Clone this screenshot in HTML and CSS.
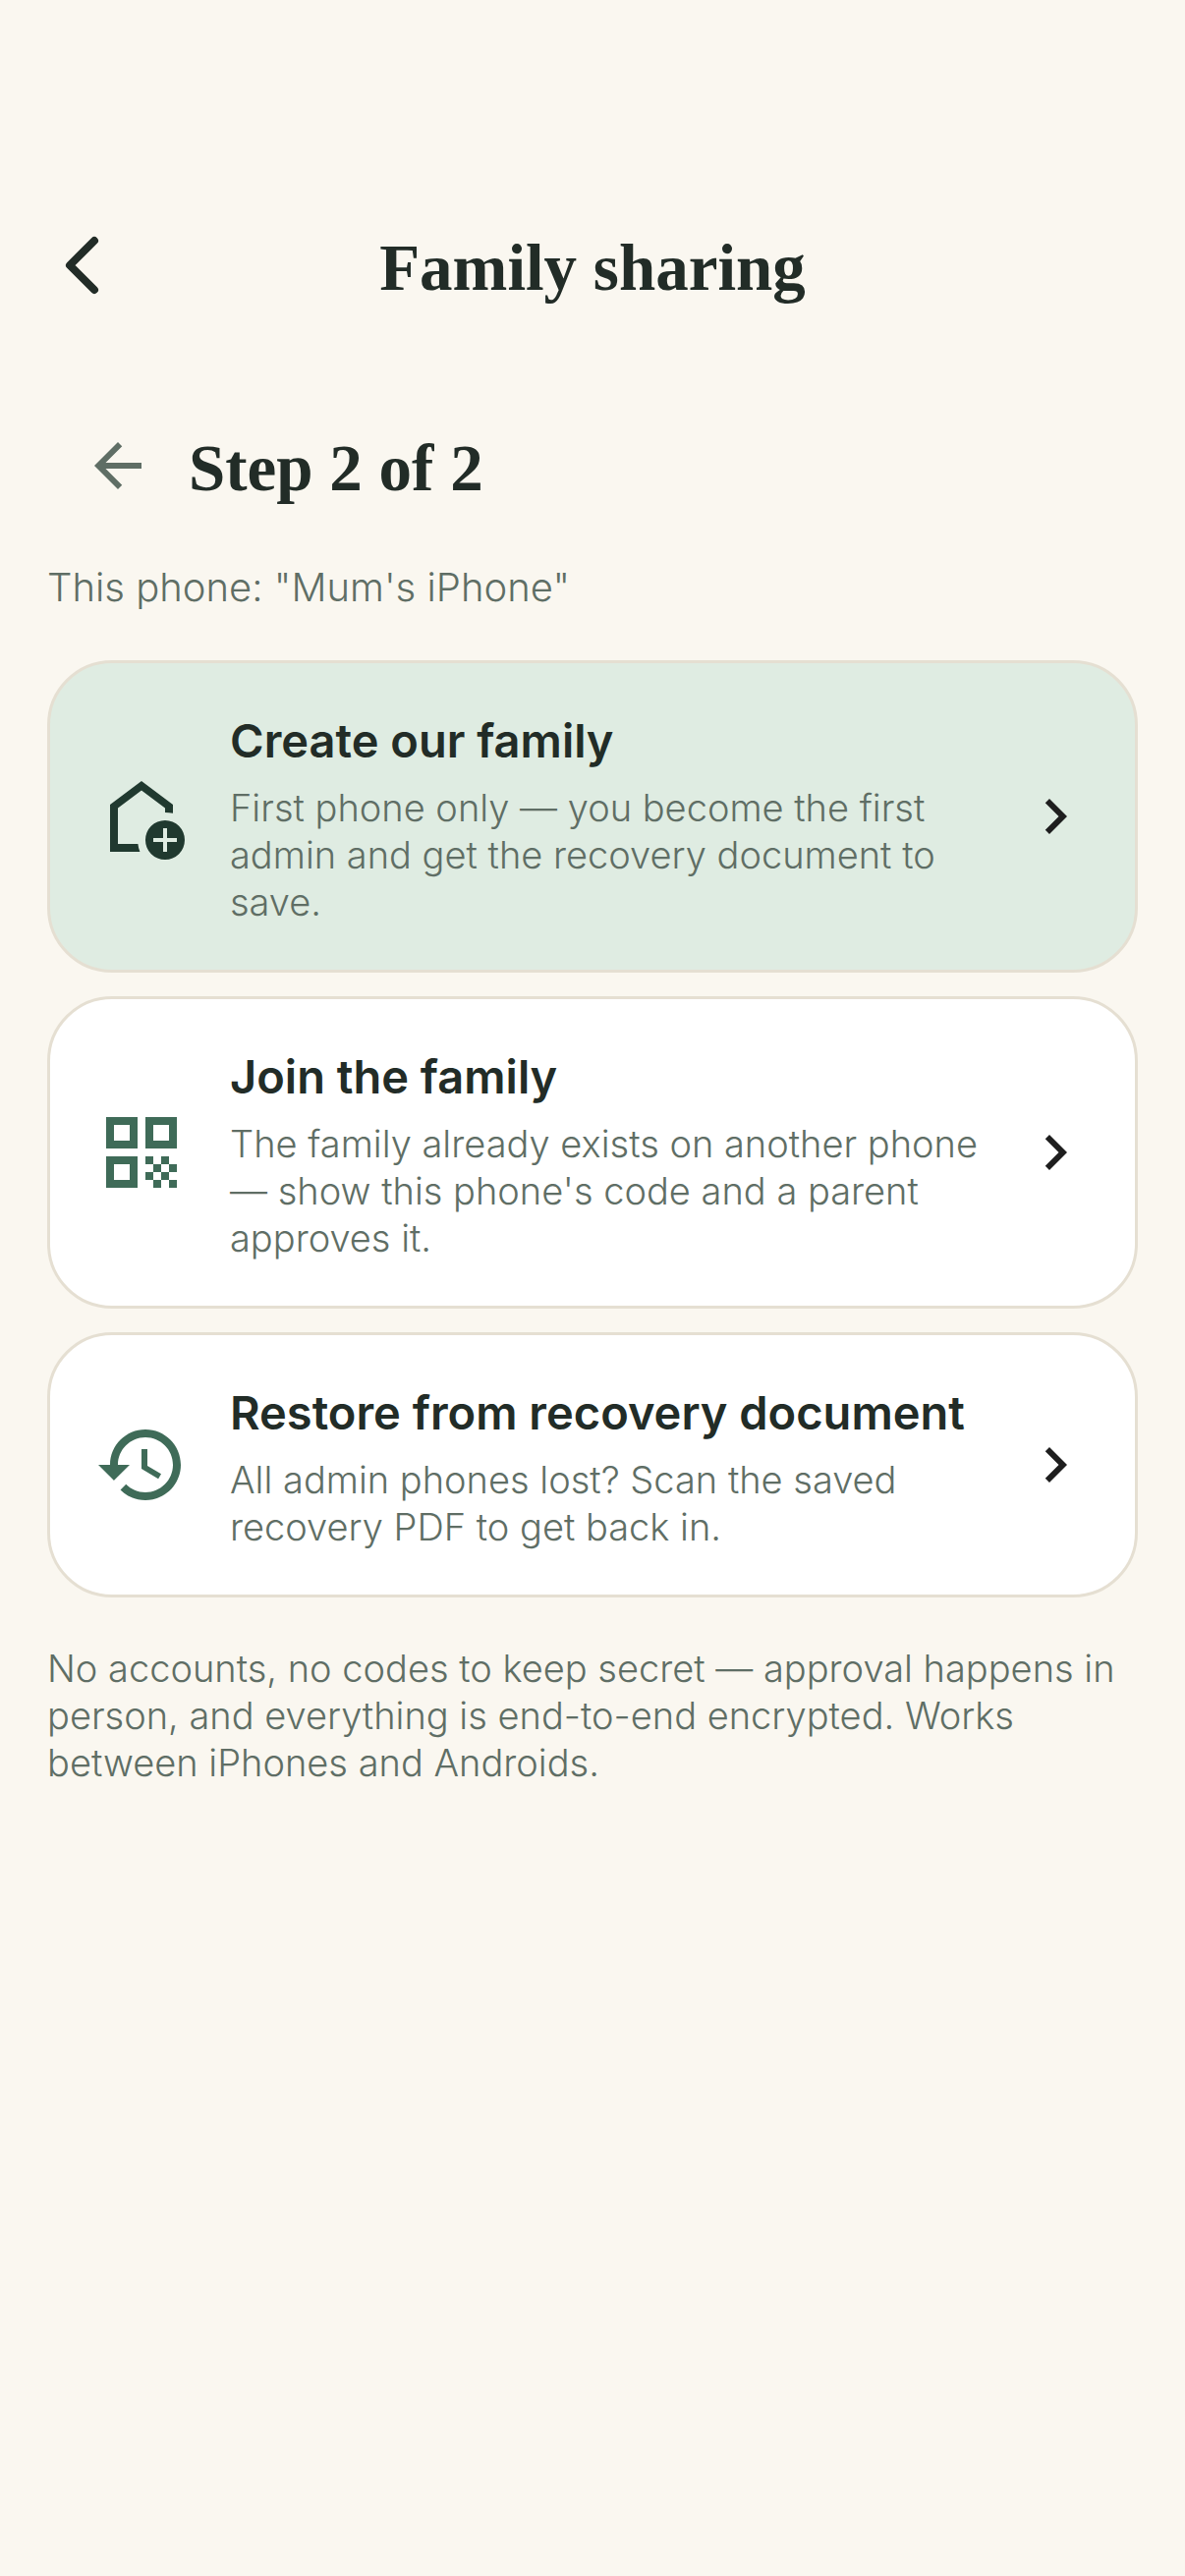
FILE: index.html
```html
<!DOCTYPE html>
<html lang="en">
<head>
    <meta charset="UTF-8">
    <meta name="viewport" content="width=device-width, initial-scale=1.0">
    <title>Family sharing</title>
    <link rel="stylesheet" href="styles.css">
</head>
<body>
    <header class="top-bar">
        <button class="icon-button" type="button" aria-label="Back">
            <svg class="icon-small" viewBox="0 0 72 72">
                <path d="M48 11 23 36l25 25" fill="none" stroke="currentColor" stroke-width="8" stroke-linecap="round" stroke-linejoin="round"/>
            </svg>
        </button>
        <h1 class="heading">Family sharing</h1>
    </header>

    <main class="content">
        <!-- Step header -->
        <div class="step">
            <button class="icon-button step-back" type="button" aria-label="Previous step">
                <svg class="icon-small" viewBox="0 0 24 24">
                    <path d="M20 11H7.83l5.59-5.59L12 4l-8 8 8 8 1.41-1.41L7.83 13H20z" fill="currentColor"/>
                </svg>
            </button>
            <h2 class="heading">Step 2 of 2</h2>
        </div>
        <p class="device">This phone: "Mum's iPhone"</p>

        <!-- Options -->
        <div class="options">
            <button class="card card-primary" type="button">
                <svg class="icon" viewBox="0 0 24 24" aria-hidden="true">
                    <path d="M4 9v12h7.6q-.4-1-.5-2H6v-9.100l6-4.500 6 4.500V11q1 0 2 .2V9l-8-6z" fill="currentColor"/>
                    <path d="M18 13a5 5 0 1 0 0 10 5 5 0 0 0 0-10zm3 5.500h-2.500V21h-1v-2.500H15v-1h2.500V15h1v2.500H21z" fill="currentColor"/>
                </svg>
                <span class="card-text">
                    <span class="card-title">Create our family</span>
                    <span class="card-info">First phone only — you become the first admin and get the recovery document to save.</span>
                </span>
                <svg class="chevron" viewBox="0 0 24 24" aria-hidden="true">
                    <path d="M10 6 8.590 7.410 13.170 12l-4.580 4.590L10 18l6-6z" fill="currentColor"/>
                </svg>
            </button>

            <button class="card" type="button">
                <svg class="icon" viewBox="0 0 24 24" aria-hidden="true">
                    <path d="M3 3v8h8V3zm6 6H5V5h4zM3 13v8h8v-8zm6 6H5v-4h4zM13 3v8h8V3zm6 6h-4V5h4z" fill="currentColor"/>
                    <path d="M13 13h2v2h-2zM17 13h2v2h-2zM15 15h2v2h-2zM19 15h2v2h-2zM13 17h2v2h-2zM17 17h2v2h-2zM15 19h2v2h-2zM19 19h2v2h-2z" fill="currentColor"/>
                </svg>
                <span class="card-text">
                    <span class="card-title">Join the family</span>
                    <span class="card-info">The family already exists on another phone — show this phone's code and a parent approves it.</span>
                </span>
                <svg class="chevron" viewBox="0 0 24 24" aria-hidden="true">
                    <path d="M10 6 8.590 7.410 13.170 12l-4.580 4.590L10 18l6-6z" fill="currentColor"/>
                </svg>
            </button>

            <button class="card" type="button">
                <svg class="icon" viewBox="0 0 24 24" aria-hidden="true">
                    <path d="M13 3c-4.970 0-9 4.030-9 9H1l3.890 3.890.07.14L9 12H6c0-3.870 3.130-7 7-7s7 3.130 7 7-3.130 7-7 7c-1.930 0-3.680-.79-4.940-2.060l-1.420 1.420C8.270 19.990 10.510 21 13 21c4.970 0 9-4.030 9-9s-4.030-9-9-9zm-1 5v5l4.280 2.540.72-1.210-3.500-2.080V8z" fill="currentColor"/>
                </svg>
                <span class="card-text">
                    <span class="card-title">Restore from recovery document</span>
                    <span class="card-info">All admin phones lost? Scan the saved recovery PDF to get back in.</span>
                </span>
                <svg class="chevron" viewBox="0 0 24 24" aria-hidden="true">
                    <path d="M10 6 8.590 7.410 13.170 12l-4.580 4.590L10 18l6-6z" fill="currentColor"/>
                </svg>
            </button>
        </div>

        <p class="note">No accounts, no codes to keep secret — approval happens in person, and everything is end-to-end encrypted. Works between iPhones and Androids.</p>
    </main>
</body>
</html>
```

FILE: styles.css
```css
* {
    box-sizing: border-box;
}
body {
    margin: 0;
    padding: 186px 48px 48px;
    min-height: 100vh;
    background-color: #faf7f0;
    color: #222c27;
    font-family: Inter, "Liberation Sans", sans-serif;
}
button {
    font-family: inherit;
    color: inherit;
    border: none;
    background: none;
    cursor: pointer;
}
svg {
    display: block;
    flex-shrink: 0;
}
.heading {
    margin: 0;
    padding-top: 4px;
    font-family: "Liberation Serif", serif;
    font-size: 67px;
    line-height: 84px;
    font-weight: bold;
}
.top-bar {
    display: grid;
    grid-template-columns: 72px 1fr 72px;
    align-items: center;
    height: 168px;
    text-align: center;
}
.icon-button {
    padding: 0;
    width: 72px;
    height: 72px;
}
.icon-small {
    width: 72px;
    height: 72px;
}
.content {
    padding-top: 78px;
}
.step {
    display: flex;
    align-items: center;
    gap: 36px;
    height: 84px;
    padding-left: 36px;
}
.step-back {
    color: #5f6e65;
}
.device {
    margin: 52px 0 44px;
    font-size: 40px;
    line-height: 60px;
    font-weight: 300;
    color: #5f6e65;
}
.options {
    display: flex;
    flex-direction: column;
    gap: 24px;
}
.card {
    display: flex;
    align-items: center;
    width: 100%;
    padding: 45px;
    background-color: #ffffff;
    border: 3px solid #e5dfd2;
    border-radius: 66px;
    color: #3f6b58;
    text-align: left;
}
.card-primary {
    background-color: #dfece2;
    color: #20392f;
}
.icon {
    width: 96px;
    height: 96px;
    margin-right: 42px;
}
.card-text {
    display: flex;
    flex-direction: column;
    gap: 10px;
    flex: 1;
}
.card-title {
    font-size: 47px;
    line-height: 68px;
    font-weight: 600;
    color: #222c27;
}
.card-info {
    font-size: 38px;
    line-height: 48px;
    font-weight: 300;
    color: #5f6e65;
}
.chevron {
    width: 72px;
    height: 72px;
    margin-left: 24px;
    color: #1e1e1e;
}
.note {
    margin: 48px 0 0;
    font-size: 38px;
    line-height: 48px;
    font-weight: 300;
    color: #5f6e65;
}
```
